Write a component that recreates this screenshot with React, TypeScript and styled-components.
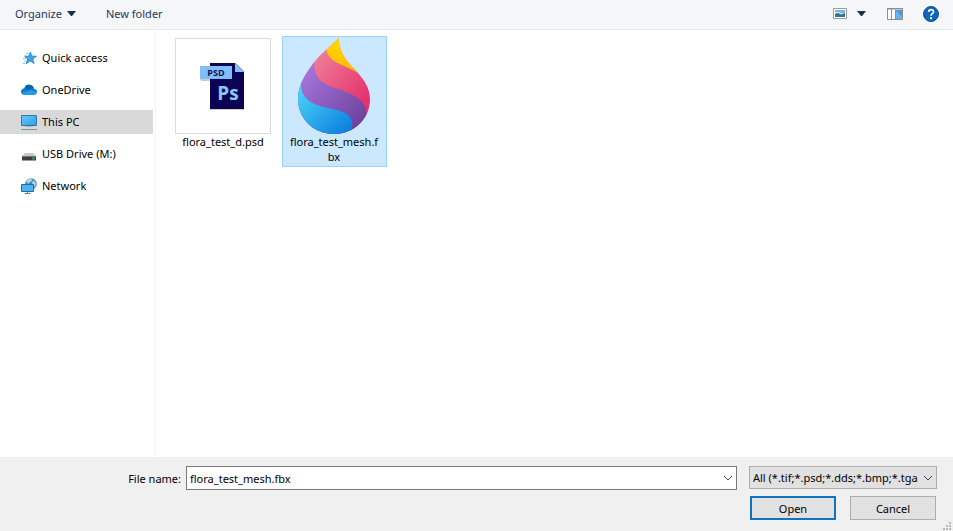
import React, { useState } from "react";
import styled, { createGlobalStyle } from "styled-components";

const GlobalStyle = createGlobalStyle`
  *, *::before, *::after { box-sizing: border-box; }
  body { margin: 0; background: #fff; }
  body, button, input, select { font-family: "Noto Sans", "Open Sans", sans-serif; font-size: 11px; color: #000; }
  button { cursor: default; }
`;

const Dialog = styled.main`
  display: flex;
  flex-direction: column;
  min-height: 100vh;
`;

const Toolbar = styled.header`
  display: flex;
  align-items: center;
  height: 30px;
  padding: 0 14px 2px 15px;
  background: #f4f6f8;
  border-bottom: 1px solid #e6eaee;
`;

const ToolButton = styled.button<{ $gap?: number }>`
  display: flex;
  align-items: center;
  gap: 5px;
  padding: 0;
  margin-right: ${(p) => p.$gap ?? 0}px;
  border: 0;
  background: none;
  color: #1e395b;
  line-height: 16px;
`;

const Spacer = styled.div`
  flex: 1;
`;

const Body = styled.div`
  display: flex;
  flex: 1;
`;

const Sidebar = styled.nav`
  display: flex;
  flex-direction: column;
  gap: 8px;
  width: 156px;
  padding: 16px 2px 16px 0;
  border-right: 1px solid #f4f5f6;
`;

const Place = styled.a<{ $current?: boolean }>`
  display: flex;
  align-items: center;
  gap: 5px;
  height: 24px;
  padding-left: 21px;
  color: #000;
  text-decoration: none;
  white-space: nowrap;
  line-height: 24px;
  background: ${(p) => (p.$current ? "#d9d9d9" : "transparent")};

  svg { flex: none; }
`;

const Files = styled.section`
  display: flex;
  flex: 1;
  flex-wrap: wrap;
  align-content: flex-start;
  align-items: flex-start;
  gap: 6px;
  padding: 6px 15px;
`;

const FileCard = styled.button<{ $selected: boolean }>`
  display: flex;
  flex-direction: column;
  align-items: center;
  width: 105px;
  padding: 1px 5px 2px 4px;
  border: 1px solid ${(p) => (p.$selected ? "#99d1ff" : "transparent")};
  background: ${(p) => (p.$selected ? "#cce8ff" : "transparent")};
`;

const Thumb = styled.span<{ $framed?: boolean }>`
  display: flex;
  align-items: center;
  justify-content: center;
  width: 96px;
  height: 96px;
  border: ${(p) => (p.$framed ? "1px solid #dcdcdc" : "0")};
`;

const FileLabel = styled.span`
  width: 92px;
  line-height: 15px;
  word-break: break-all;
`;

const Footer = styled.form`
  display: flex;
  flex-direction: column;
  gap: 6px;
  padding: 9px 16px 11px;
  background: #f0f0f0;
  position: relative;
`;

const FooterRow = styled.div<{ $end?: boolean }>`
  display: flex;
  align-items: center;
  justify-content: ${(p) => (p.$end ? "flex-end" : "flex-start")};
  gap: ${(p) => (p.$end ? 14 : 12)}px;
`;

const NameLabel = styled.label`
  width: 165px;
  margin-right: -7px;
  text-align: right;
`;

const Combo = styled.div`
  display: flex;
  flex: 1;
  height: 24px;
  border: 1px solid #7a7a7a;
  background: #fff;
`;

const NameInput = styled.input`
  flex: 1;
  min-width: 0;
  padding: 1px 3px 0;
  border: 0;
  outline: 0;
  background: none;
`;

const ComboArrow = styled.button`
  display: flex;
  align-items: center;
  padding: 0 3px;
  border: 0;
  background: none;
`;

const TypeWrap = styled.div`
  display: grid;
  width: 188px;
  height: 24px;
  padding-bottom: 1px;
  align-items: center;

  > * { grid-area: 1 / 1; }
  > svg { justify-self: end; margin-right: 4px; pointer-events: none; }
`;

const TypeSelect = styled.select`
  appearance: none;
  width: 100%;
  height: 23px;
  padding: 0 17px 0 3px;
  border: 1px solid #adadad;
  border-radius: 0;
  background: #e1e1e1;
`;

const ActionButton = styled.button<{ $primary?: boolean }>`
  width: 86px;
  height: 24px;
  margin-right: ${(p) => (p.$primary ? 0 : 1)}px;
  padding: 0;
  border: ${(p) => (p.$primary ? "2px solid #1173c0" : "1px solid #adadad")};
  background: #e1e1e1;
`;

const Grip = styled.svg`
  position: absolute;
  right: 1px;
  bottom: 0;
`;

const Caret = () => (
  <svg width="9" height="5" viewBox="0 0 9 5" aria-hidden="true">
    <path d="M0 0h9L5 5H4z" fill="#1b2f4d" />
  </svg>
);

const Chevron = () => (
  <svg width="10" height="10" viewBox="0 0 10 10" fill="none" stroke="#444" aria-hidden="true">
    <path d="M1 3l4 4 4-4" />
  </svg>
);

const StarIcon = () => (
  <svg width="16" height="16" viewBox="0 0 16 16" aria-hidden="true">
    <path d="M9.500 2l1.300 4 4.700.300-3.700 2.700 1.300 4.500-3.900-2.400-4 2.700 1.300-4.700L3.500 6.300l4.300-.300z" fill="#39a9e6" stroke="#1e7dbb" strokeWidth=".7" />
    <path d="M5 3.500h3M2 8.500h4M3 11h2M1.500 13.500h3M3 6h2" stroke="#7dbde3" strokeWidth=".8" />
  </svg>
);

const CloudIcon = () => (
  <svg width="16" height="16" viewBox="0 0 16 16" aria-hidden="true">
    <path d="M3 7C4 3 7 1.800 10 3.100c1.600.6 2.500 1.800 3 3.400L8 10z" fill="#0763b6" />
    <path d="M3 6.300C0 6.700-.8 10 .9 12L9 9.500 6 7.200C5 6.500 4 6.200 3 6.300z" fill="#1279cd" />
    <path d="M.6 11.500L9 8c1.500-1.500 5-1.200 6.300.3 1.500 2 .4 4.700-2.300 4.700H3.500c-1.300 0-2.300-.5-2.900-1.500z" fill="#249be5" />
    <path d="M9 8c1-1.100 2.500-1.500 4-1.200 1.600.3 3 1.500 2.900 3.200z" fill="#137bcf" />
  </svg>
);

const PcIcon = () => (
  <svg width="16" height="16" viewBox="0 0 16 16" aria-hidden="true">
    <defs>
      <linearGradient id="screen" x1="0" y1="0" x2="1" y2="1">
        <stop offset="0" stopColor="#6cc8fb" /><stop offset="1" stopColor="#2a9de8" />
      </linearGradient>
    </defs>
    <path d="M.5 1.500h15v10H.5z" fill="url(#screen)" stroke="#34769f" />
    <path d="M4 12.500h8" stroke="#a4bdcf" />
    <path d="M0 15.500h16" stroke="#7797ad" />
  </svg>
);

const DriveIcon = () => (
  <svg width="16" height="16" viewBox="0 0 16 16" aria-hidden="true">
    <path d="M4 7h8l3 3H1z" fill="#c6c8c8" />
    <path d="M1 10h14v4.500H1z" fill="#3b3e3d" />
    <path d="M1 10.500h14" stroke="#777" />
    <path d="M11.500 11.500h2v2h-2z" fill="#35d16b" />
  </svg>
);

const NetworkIcon = () => (
  <svg width="16" height="16" viewBox="0 0 16 16" aria-hidden="true">
    <circle cx="10" cy="6" r="5.800" fill="#4689ad" />
    <path d="M5 3c3-3 6-3 6-1S8 4 7.500 6M12 2l3 3-1 4-3-3z" fill="#a8d6ea" />
    <path d="M.5 6.500h12v7H.5z" fill="#4bb6f3" stroke="#23699a" />
    <path d="M6.500 14v1.500M3.500 15.500h6" stroke="#4e83a5" />
  </svg>
);

const ViewIcon = () => (
  <svg width="14" height="11" viewBox="0 0 14 11" aria-hidden="true">
    <path d="M.5.5h13v10H.5z" fill="#fff" stroke="#999c9f" />
    <path d="M2 2h10v7H2z" fill="#72b5e9" />
    <path d="M2 4h4l2 1h4v2H2z" fill="#d2e4ef" />
    <path d="M2 6l3-1 3 1.500L12 5v2H2z" fill="#456a64" />
    <path d="M2 7h10v2H2z" fill="#2875b4" />
  </svg>
);

const PaneIcon = () => (
  <svg width="16" height="12" viewBox="0 0 16 12" aria-hidden="true">
    <path d="M.5.5h15v11H.5z" fill="#fff" stroke="#8c8f92" />
    <path d="M0 1h16M4.500 1v10" stroke="#8c8f92" />
    <path d="M9 2h6v9H9z" fill="#6bb2ec" />
    <path d="M9 2l6 7V2z" fill="#4b99dd" />
    <path d="M8.500 2v9" stroke="#8c8f92" />
  </svg>
);

const HelpIcon = () => (
  <svg width="16" height="16" viewBox="0 0 16 16" aria-hidden="true">
    <circle cx="8" cy="8" r="7.500" fill="#0d66bd" stroke="#0a4f96" />
    <path d="M5.700 6C5.700 3 10.500 3 10.500 5.700c0 2-2.500 2-2.500 4" fill="none" stroke="#fff" strokeWidth="1.700" />
    <circle cx="8" cy="12.200" r="1.100" fill="#fff" />
  </svg>
);

const PsdIcon = () => (
  <svg width="46" height="48" viewBox="0 0 46 48" aria-hidden="true">
    <path d="M10 2h34v46H10zM0 17h12v2H1z" fill="#999" opacity=".5" />
    <path d="M10 1h25l9 9v37H10z" fill="#0b0452" />
    <path d="M35 0h10v10z" fill="#fff" />
    <path d="M35 1l9 9h-9z" fill="#82bdff" />
    <path d="M0 4h32v13H0z" fill="#82bdff" />
    <text x="16" y="14" textAnchor="middle" fontFamily="Open Sans, sans-serif" fontWeight="700" fontSize="9" fill="#0b1450">PSD</text>
    <text x="28" y="38" textAnchor="middle" fontFamily="Open Sans, sans-serif" fontWeight="700" fontSize="19" fill="#8cc8ff">Ps</text>
  </svg>
);

const DropIcon = () => (
  <svg width="72" height="96" viewBox="0 0 72 96" aria-hidden="true">
    <defs>
      <clipPath id="drop">
        <path d="M40.500 0C41 9 44 17 50 24C58 34 72 44 72 61C72 81 56 96 36 96S0 81 0 61C0 46 8 35 18 22C25 13 34 8 40.500 0z" />
      </clipPath>
      <linearGradient id="yellow" x1="0" y1="0" x2="0" y2="1">
        <stop offset="0" stopColor="#ffda00" /><stop offset="1" stopColor="#ffb900" />
      </linearGradient>
      <linearGradient id="pink" x1="0" y1="0" x2="1" y2="1">
        <stop offset="0.200" stopColor="#ef8099" /><stop offset=".8" stopColor="#e5326c" />
      </linearGradient>
      <linearGradient id="purple" x1="0" y1="0" x2="1" y2="1">
        <stop offset="0" stopColor="#b07de5" /><stop offset="1" stopColor="#643b96" />
      </linearGradient>
      <linearGradient id="blue" x1="0" y1="0" x2="1" y2="1">
        <stop offset="0" stopColor="#4ed9fb" /><stop offset="1" stopColor="#0879db" />
      </linearGradient>
    </defs>
    <g clipPath="url(#drop)">
      <path d="M0 0h72v96H0z" fill="url(#pink)" />
      <path d="M28.500 8C28 25 44 25 60 35L72 0H29z" fill="url(#yellow)" />
      <path d="M17 20C14 37 21 45 37 50C56 56 69 62 69 78L69 96H0V20z" fill="url(#purple)" />
      <path d="M3 47C4 62 15 67 30 70C46 73 56 77 54 88L52 96H0V47z" fill="url(#blue)" />
    </g>
  </svg>
);

const places = [
  { name: "Quick access", Icon: StarIcon },
  { name: "OneDrive", Icon: CloudIcon },
  { name: "This PC", Icon: PcIcon },
  { name: "USB Drive (M:)", Icon: DriveIcon },
  { name: "Network", Icon: NetworkIcon },
];

const files = [
  { name: "flora_test_d.psd", Icon: PsdIcon, framed: true },
  { name: "flora_test_mesh.fbx", Icon: DropIcon, framed: false },
];

export default function App() {
  const [fileName, setFileName] = useState("flora_test_mesh.fbx");

  return (
    <>
      <GlobalStyle />
      <Dialog>
        <Toolbar>
          <ToolButton $gap={30}>Organize <Caret /></ToolButton>
          <ToolButton>New folder</ToolButton>
          <Spacer />
          <ToolButton $gap={10} aria-label="Change view"><ViewIcon /></ToolButton>
          <ToolButton $gap={21} aria-label="More view options"><Caret /></ToolButton>
          <ToolButton $gap={20} aria-label="Preview pane"><PaneIcon /></ToolButton>
          <ToolButton aria-label="Help"><HelpIcon /></ToolButton>
        </Toolbar>
        <Body>
          <Sidebar aria-label="Places">
            {places.map(({ name, Icon }) => (
              <Place key={name} href="#" $current={name === "This PC"}><Icon />{name}</Place>
            ))}
          </Sidebar>
          <Files aria-label="Files">
            {files.map(({ name, Icon, framed }) => (
              <FileCard key={name} type="button" $selected={name === fileName} onClick={() => setFileName(name)}>
                <Thumb $framed={framed}><Icon /></Thumb>
                <FileLabel>{name}</FileLabel>
              </FileCard>
            ))}
          </Files>
        </Body>
        <Footer onSubmit={(e) => e.preventDefault()}>
          <FooterRow>
            <NameLabel htmlFor="file-name">File name:</NameLabel>
            <Combo>
              <NameInput id="file-name" value={fileName} onChange={(e) => setFileName(e.target.value)} />
              <ComboArrow type="button" aria-label="Recent file names"><Chevron /></ComboArrow>
            </Combo>
            <TypeWrap>
              <TypeSelect aria-label="File type">
                <option>All (*.tif;*.psd;*.dds;*.bmp;*.tga</option>
              </TypeSelect>
              <Chevron />
            </TypeWrap>
          </FooterRow>
          <FooterRow $end>
            <ActionButton type="submit" $primary>Open</ActionButton>
            <ActionButton type="button">Cancel</ActionButton>
          </FooterRow>
          <Grip width="9" height="9" viewBox="0 0 9 9" aria-hidden="true">
            <path d="M6 0h2v2H6zM3 3h2v2H3zM6 3h2v2H6zM0 6h2v2H0zM3 6h2v2H3zM6 6h2v2H6z" fill="#b8b8b8" />
          </Grip>
        </Footer>
      </Dialog>
    </>
  );
}
